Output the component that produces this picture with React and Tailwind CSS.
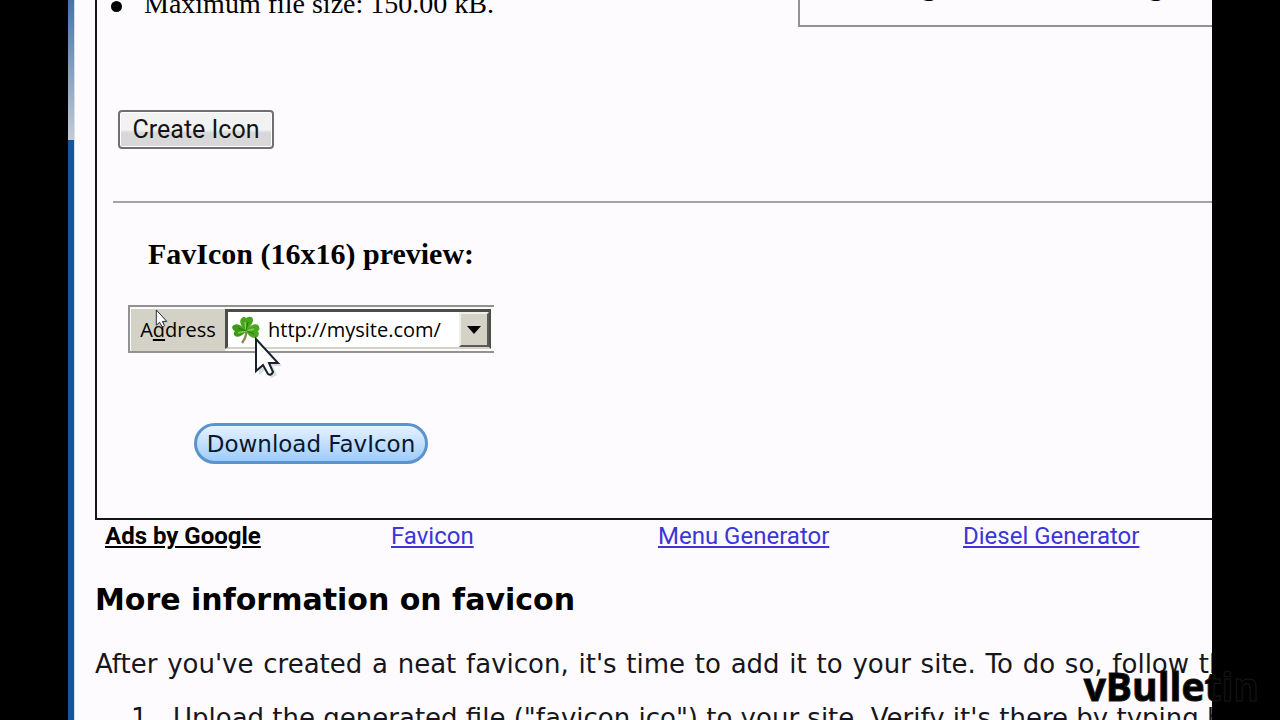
function Shamrock() {
  return (
    <svg className="size-7 shrink-0" viewBox="0 0 28 28" aria-hidden="true">
      <path d="M14 14C15 19 13 23 10 27" fill="none" stroke="#8a8a62" strokeWidth="2.4" />
      <path d="M14 15C9 11 7 5 9 3C11 0 13 1 14 2C17 0 21 0 21 4C21 8 17 11 14 15Z" fill="#45a51c" />
      <path d="M14 15C11 20 5 22 3 20C1 18 2 16 3 15C0 14 -1 10 2 9C6 7 10 10 14 15Z" fill="#3b9a16" />
      <path d="M14 15C17 10 23 7 26 9C28 12 28 14 26 15C28 18 26 22 23 22C19 22 16 19 14 15Z" fill="#49a81f" />
      <path d="M14 15L13 6M14 15L6 17M14 15L22 13" stroke="#86d050" strokeWidth="1.4" />
      <path d="M14 15L6 12M14 15L16 6M15 15L22 18" stroke="#287a0a" strokeWidth="1" />
    </svg>
  );
}

function Pointer({ className }) {
  return (
    <svg className={className} viewBox="0 0 28 42" aria-hidden="true">
      <path d="M5 6V38L12 32L17 41L23 38L19 29H28Z" fill="#b9bdc4" opacity="0.5" />
      <path d="M2 2V34L9 28L14 37Q17 39 19 35L15 26H24Z" fill="#fff" stroke="#18222c" strokeWidth="2" />
    </svg>
  );
}

function AddressPreview() {
  return (
    <div className="relative ml-[31px] w-[366px] font-['Open_Sans',sans-serif] text-[20px]">
      <div className="flex h-12 border-y-2 border-l-2 border-[#929292] bg-[#fcfbfc] pt-[2px] pr-[3px]">
        <label htmlFor="address" className="flex h-[42px] w-[95px] items-center justify-center border-l border-white bg-[#d4d2c7]">
          <span>A<span className="underline decoration-2 underline-offset-2">d</span>dress</span>
        </label>
        <div className="flex h-10 min-w-0 flex-1 items-center border-2 border-t-[3px] border-l-[3px] border-[#4c4c49] border-b-[#d4d2c7] bg-white pl-1">
          <Shamrock />
          <input
            id="address"
            defaultValue="http://mysite.com/"
            className="min-w-0 flex-1 bg-transparent pl-2 text-black outline-none"
          />
          <button
            aria-label="Show addresses"
            className="flex h-full w-[30px] shrink-0 items-center justify-center border-2 border-[#eeeeea] border-r-[#5a5a56] border-b-[#5a5a56] bg-[#d4d2c7]"
          >
            <svg className="h-2 w-3.5" viewBox="0 0 14 8" aria-hidden="true">
              <path d="M0 0H14L7 8Z" fill="#000" />
            </svg>
          </button>
        </div>
      </div>
      <Pointer className="absolute top-1 left-[27px] h-5 w-3.5" />
      <Pointer className="absolute top-8 left-[126px] h-[42px] w-7" />
    </div>
  );
}

const adLinks = [
  { label: "Favicon", cell: "w-[267px]" },
  { label: "Menu Generator", cell: "w-[305px]" },
  { label: "Diesel Generator", cell: "" },
];

export default function App() {
  return (
    <div className="relative flex h-screen overflow-hidden bg-black px-[68px] text-black">
      <div className="flex w-1.5 shrink-0 flex-col">
        <div className="h-[140px] bg-linear-to-b from-[#4673a8] to-[#c3ccd6]" />
        <div className="flex-1 bg-[#15559c]" />
      </div>
      <main className="min-w-0 flex-1 overflow-hidden border-l border-[#d5dde6] bg-[#fdfbfd] pl-5 font-['DejaVu_Sans',sans-serif]">
        <section className="h-[520px] overflow-hidden border-b-2 border-l-2 border-[#161616]">
          <div className="flex h-[27px] justify-between font-['Liberation_Serif',serif] text-[28px] leading-8">
            <ul className="-mt-3 ml-[14px]">
              <li className="flex items-center gap-[22px]">
                <span className="mt-1 size-[11px] rounded-full bg-black" />
                Maximum file size: 150.00 kB.
              </li>
            </ul>
            <div className="flex h-[27px] w-[414px] items-end gap-[213px] overflow-hidden border-b-2 border-l-2 border-[#929292] pb-[23px] pl-[122px] font-bold">
              <span>g</span>
              <span>g</span>
            </div>
          </div>
          <button className="mt-[83px] ml-[21px] block h-[39px] w-[156px] rounded-sm border-2 border-[#707070] bg-linear-to-b from-[#f2f2f2] from-50% to-[#d8d8d8] to-60% font-['Roboto',sans-serif] text-[25px] leading-8 text-[#141414] inset-ring inset-ring-white">
            Create Icon
          </button>
          <hr className="mt-[52px] ml-4 border-t-2 border-[#a5a4a5]" />
          <h3 className="mt-[35px] ml-[51px] font-['Liberation_Serif',serif] text-[30px] leading-8 font-bold">
            FavIcon (16x16) preview:
          </h3>
          <div className="mt-[35px]">
            <AddressPreview />
          </div>
          <button className="mt-[70px] ml-[97px] block h-[41px] w-[234px] rounded-full border-[3px] border-[#5b94cd] bg-linear-to-b from-[#e6f2ff] to-[#9dccfb] text-[23px] leading-8 text-[#0a1730]">
            Download FavIcon
          </button>
        </section>
        <nav className="flex pl-[10px] font-['Roboto',sans-serif] text-[24px] leading-8 whitespace-nowrap">
          <a href="#ads" className="w-[286px] font-bold underline">
            Ads by Google
          </a>
          {adLinks.map(({ label, cell }) => (
            <span key={label} className={cell}>
              <a href="#ads" className="text-[#3b36d6] underline">
                {label}
              </a>
            </span>
          ))}
        </nav>
        <h2 className="mt-7 text-[30px] leading-10 font-bold whitespace-nowrap">More information on favicon</h2>
        <p className="mt-7 w-[1176px] text-[26px] leading-8 whitespace-nowrap text-[#16161c] [text-align-last:justify]">
          After you've created a neat favicon, it's time to add it to your site. To do so, follow these
        </p>
        <ol className="mt-[22px] pl-9 text-[26px] leading-8 whitespace-nowrap text-[#16161c]">
          <li className="flex">
            <span className="w-[42px] shrink-0">1.</span>
            Upload the generated file ("favicon.ico") to your site. Verify it's there by typing http://
          </li>
        </ol>
      </main>
      <p className="absolute right-[21px] bottom-[9px] font-['Open_Sans',sans-serif] text-[39px] leading-[50px] font-bold text-black [-webkit-text-stroke:1px_#181818]">
        vBulletin
      </p>
    </div>
  );
}
